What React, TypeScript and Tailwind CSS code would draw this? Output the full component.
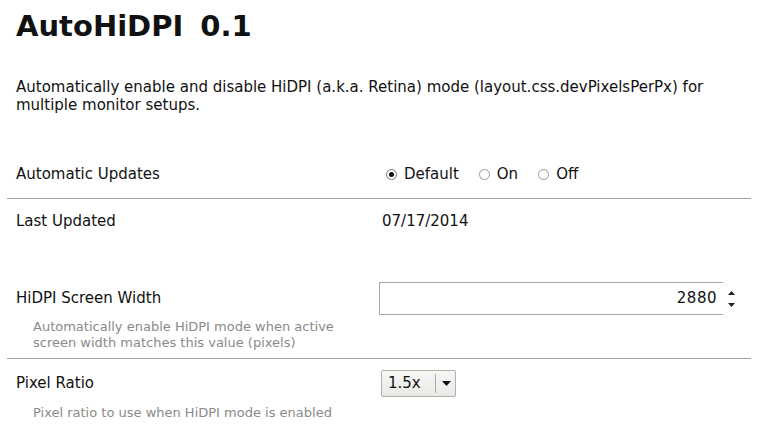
export default function App() {
  return (
    <div className="w-[758px] h-[434px] bg-white text-[15px] text-[#111] font-['DejaVu_Sans',sans-serif] overflow-hidden">
      {/* Header */}
      <div className="pl-4 pt-[7px] flex items-baseline gap-[17px] font-bold text-[29px] leading-[38px]">
        <span>AutoHiDPI</span>
        <span>0.1</span>
      </div>

      <p className="pl-4 pr-8 mt-[33px] leading-[18px]">
        Automatically enable and disable HiDPI (a.k.a. Retina) mode (layout.css.devPixelsPerPx) for multiple monitor setups.
      </p>

      {/* Automatic Updates */}
      <div className="mt-[48px] flex items-center h-[24px] pl-4">
        <div className="w-[366px]">Automatic Updates</div>
        <div className="flex items-center gap-[20px] pl-[4px]">
          <label className="flex items-center gap-[7px]">
            <span className="w-[11px] h-[11px] rounded-full border border-[#777] flex items-center justify-center">
              <span className="w-[5px] h-[5px] rounded-full bg-[#111]" />
            </span>
            Default
          </label>
          <label className="flex items-center gap-[7px]">
            <span className="w-[11px] h-[11px] rounded-full border border-[#999]" />
            On
          </label>
          <label className="flex items-center gap-[7px]">
            <span className="w-[11px] h-[11px] rounded-full border border-[#999]" />
            Off
          </label>
        </div>
      </div>
      <div className="mx-[7px] mt-[12px] h-px bg-[#a3a39c]" />

      {/* Last Updated */}
      <div className="mt-[10px] flex items-center h-[24px] pl-4">
        <div className="w-[366px]">Last Updated</div>
        <div>07/17/2014</div>
      </div>

      {/* HiDPI Screen Width */}
      <div className="mt-[49px] flex items-center h-[33px] pl-4">
        <div className="w-[363px]">HiDPI Screen Width</div>
        <div className="flex items-center">
          <div className="w-[344px] h-[33px] border-l border-t border-b border-[#a8a8a8] flex items-center justify-end pr-[6px] tracking-[0.5px]">
            2880
          </div>
          <div className="ml-[5px] flex flex-col items-center gap-[8px]">
            <svg width="7" height="4" viewBox="0 0 7 4"><path d="M3.5 0 L7 4 L0 4 Z" fill="#222" /></svg>
            <svg width="7" height="4" viewBox="0 0 7 4"><path d="M0 0 L7 0 L3.5 4 Z" fill="#222" /></svg>
          </div>
        </div>
      </div>
      <p className="pl-[33px] mt-[4px] text-[13px] leading-[16px] text-[#8a8a8a]">
        Automatically enable HiDPI mode when active
        <br />
        screen width matches this value (pixels)
      </p>
      <div className="mx-[7px] mt-[7px] h-px bg-[#a3a39c]" />

      {/* Pixel Ratio */}
      <div className="mt-[11px] flex items-center h-[27px] pl-4">
        <div className="w-[365px]">Pixel Ratio</div>
        <div className="w-[75px] h-[27px] border border-[#b0b0aa] rounded-[2px] bg-gradient-to-b from-[#f7f7f5] to-[#e9e9e6] flex items-center">
          <span className="pl-[6px] w-[53px]">1.5x</span>
          <span className="w-px h-[19px] bg-[#aaa]" />
          <svg className="ml-[6px]" width="9" height="5" viewBox="0 0 9 5"><path d="M0 0 L9 0 L4.5 5 Z" fill="#111" /></svg>
        </div>
      </div>
      <p className="pl-[33px] mt-[8px] text-[13px] leading-[16px] text-[#8a8a8a]">
        Pixel ratio to use when HiDPI mode is enabled
      </p>
    </div>
  );
}
